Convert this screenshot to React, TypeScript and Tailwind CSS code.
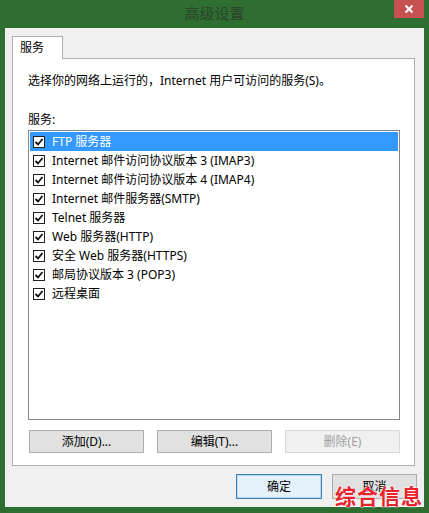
import { useState } from "react";

const services = [
  "FTP 服务器",
  "Internet 邮件访问协议版本 3 (IMAP3)",
  "Internet 邮件访问协议版本 4 (IMAP4)",
  "Internet 邮件服务器(SMTP)",
  "Telnet 服务器",
  "Web 服务器(HTTP)",
  "安全 Web 服务器(HTTPS)",
  "邮局协议版本 3 (POP3)",
  "远程桌面",
];

const font = {
  fontFamily: '"Noto Sans", "Noto Sans CJK SC", sans-serif',
};

function CheckBox() {
  return (
    <svg width="12" height="12" viewBox="0 0 12 12" className="shrink-0">
      <rect x="0.5" y="0.5" width="11" height="11" fill="#fff" stroke="#222" />
      <path d="M2.5 6 L5 8.5 L9.5 3" fill="none" stroke="#111" strokeWidth="1.8" />
    </svg>
  );
}

function App() {
  const [selected, setSelected] = useState<number>(0);

  return (
    <div
      className="w-[429px] h-[513px] bg-[#2f6e31] flex flex-col overflow-hidden relative text-[12px] text-black"
      style={font}
    >
      {/* title bar */}
      <div className="h-[28px] relative flex items-center justify-center">
        <span className="text-[15px] text-[#2c432c] -mt-[2px]">高级设置</span>
        <div className="absolute top-0 right-[5px] w-[30px] h-[18px] bg-[#c75050] flex items-center justify-center">
          <svg width="10" height="10" viewBox="0 0 10 10">
            <path d="M1.5 1.5 L8.5 8.5 M8.5 1.5 L1.5 8.5" stroke="#fff" strokeWidth="2" />
          </svg>
        </div>
      </div>

      {/* client area */}
      <div className="mx-[5px] h-[479px] bg-[#f0f0f0] pt-[8px] pl-[7px] pr-[9px] flex flex-col">
        <div className="w-[51px] h-[23px] bg-white border border-b-0 border-[#adadad] pl-[7px] flex items-center relative z-10 -mb-px">
          服务
        </div>
        <div className="h-[408px] bg-white border border-[#adadad] pl-[15px] pr-[14px] flex flex-col">
          <div className="mt-[14px] leading-[16px]">
            选择你的网络上运行的，Internet 用户可访问的服务(S)。
          </div>
          <div className="mt-[23px] leading-[16px]">服务:</div>
          <div className="mt-[2px] h-[290px] border border-[#828790] bg-white pt-px px-px">
            {services.map((s, i) => (
              <div
                key={s}
                onClick={() => setSelected(i)}
                className={`h-[19px] flex items-center gap-[7px] pl-[3px] whitespace-nowrap ${
                  selected === i ? "bg-[#3399ff] text-white" : ""
                }`}
              >
                <CheckBox />
                <span>{s}</span>
              </div>
            ))}
          </div>
          <div className="mt-[10px] flex gap-[13px] pl-px">
            <button className="w-[115px] h-[23px] bg-[#e1e1e1] border border-[#adadad]">
              添加(D)...
            </button>
            <button className="w-[115px] h-[23px] bg-[#e1e1e1] border border-[#adadad]">
              编辑(T)...
            </button>
            <button className="w-[115px] h-[23px] bg-[#f0f0f0] border border-[#d9d9d9] text-[#a0a0a0]">
              删除(E)
            </button>
          </div>
        </div>
        <div className="mt-[8px] flex justify-end gap-[10px] pr-0 -mr-[2px]">
          <button className="w-[86px] h-[25px] bg-[#e5f1fb] border border-[#3c7fb1] outline outline-1 -outline-offset-2 outline-[#0078d7]/20">
            确定
          </button>
          <button className="w-[85px] h-[25px] bg-[#e1e1e1] border border-[#adadad]">
            取消
          </button>
        </div>
      </div>

      {/* watermark overlay */}
      <div
        className="absolute right-[6px] bottom-[7px] text-[21px] font-bold text-[#e8232b] leading-none tracking-[1px]"
        style={{
          fontFamily: '"Noto Sans CJK SC", sans-serif',
          textShadow: "0 0 2px #fff, 0 0 2px #fff",
        }}
      >
        综合信息
      </div>
    </div>
  );
}

export default App;
